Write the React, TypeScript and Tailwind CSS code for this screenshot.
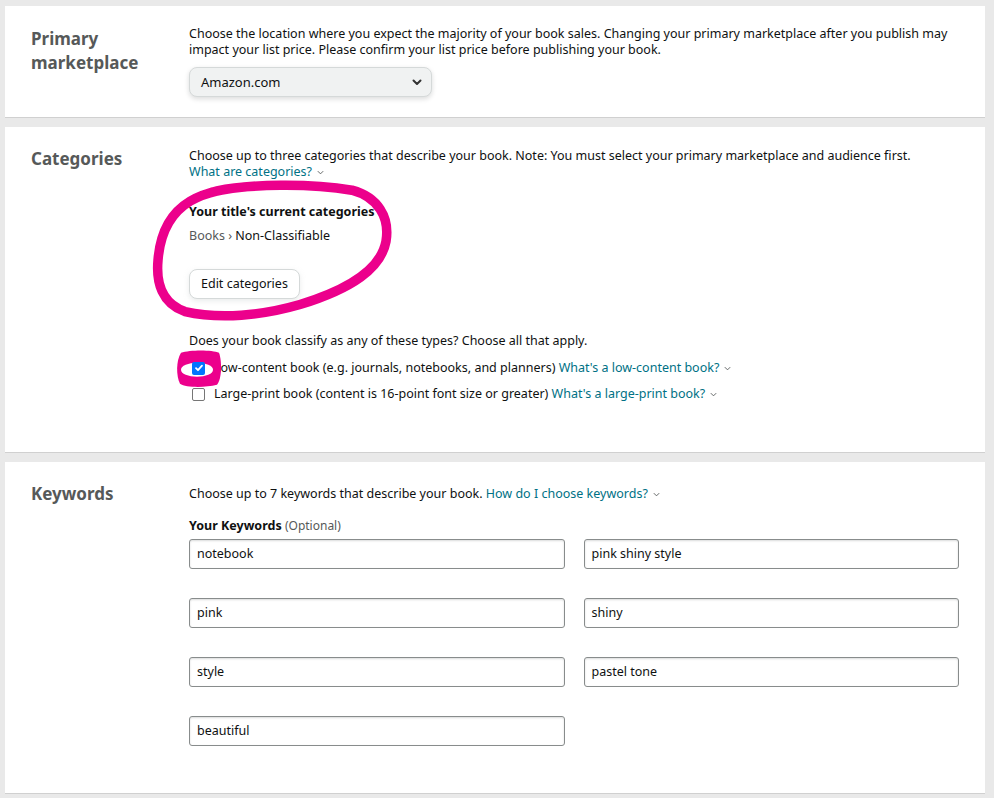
import React from 'react';

const font = { fontFamily: '"Noto Sans", "Open Sans", Arial, sans-serif' };

const Chevron = () => (
  <svg className="inline-block w-[9px] h-[9px] ml-1 align-middle" viewBox="0 0 10 10" fill="none" stroke="#565959" strokeWidth="1">
    <path d="M2 3.5l3 3 3-3" />
  </svg>
);

const Link = ({ children }: { children: React.ReactNode }) => (
  <span className="text-[#007185]">
    {children}
    <Chevron />
  </span>
);

const Card = ({
  title,
  children,
  className = '',
  titleClass = '',
}: {
  title: React.ReactNode;
  children: React.ReactNode;
  className?: string;
  titleClass?: string;
}) => (
  <div className={`bg-white border-b border-[#d0d0d0] flex px-[26px] ${className}`}>
    <div className={`w-[158px] shrink-0 text-[17px] font-bold leading-[24px] text-[#565959] ${titleClass}`}>{title}</div>
    <div className="flex-1 text-[12.5px] leading-[16px] text-[#0f1111]">{children}</div>
  </div>
);

const keywords = ['notebook', 'pink shiny style', 'pink', 'shiny', 'style', 'pastel tone', 'beautiful'];

export default function App() {
  return (
    <div className="min-h-[798px] bg-[#e9e9e9] pt-[6px] px-[5px] pr-[9px] flex flex-col gap-[9px]" style={font}>
      <Card title={<>Primary<br />marketplace</>} className="pt-[20px] pb-[20px]" titleClass="pt-[1px]">
        <p className="pr-[10px]">
          Choose the location where you expect the majority of your book sales. Changing your primary marketplace after you
          publish may impact your list price. Please confirm your list price before publishing your book.
        </p>
        <div className="mt-[9px] w-[243px] h-[30px] rounded-[8px] bg-[#f0f2f2] border border-[#d5d9d9] shadow-[0_2px_5px_rgba(15,17,17,0.15)] flex items-center justify-between pl-[11px] pr-[8px] text-[13px]">
          <span>Amazon.com</span>
          <svg className="w-[12px] h-[12px]" viewBox="0 0 12 12" fill="none" stroke="#333" strokeWidth="2" strokeLinecap="round" strokeLinejoin="round">
            <path d="M2.5 4.5l3.5 3.5 3.5-3.5" />
          </svg>
        </div>
      </Card>

      <Card title="Categories" className="pt-[20px] pb-[50px] relative">
        <p className="pt-[1px]">
          Choose up to three categories that describe your book. Note: You must select your primary marketplace and audience first.
        </p>
        <Link>What are categories?</Link>
        <div className="relative mt-[24px]">
          <div className="font-bold text-[#0f1111]">Your title's current categories</div>
          <div className="mt-[8px]">
            <span className="text-[#565959]">Books ›</span> Non-Classifiable
          </div>
          <button className="mt-[25px] h-[30px] px-[11px] rounded-[8px] bg-white border border-[#d5d9d9] shadow-[0_2px_5px_rgba(213,217,217,0.5)] text-[12.5px]">
            Edit categories
          </button>
        </div>
        <p className="mt-[34px]">Does your book classify as any of these types? Choose all that apply.</p>
        <div className="mt-[11px] flex flex-col gap-[10px]">
          <label className="relative flex items-center gap-[9px] pl-[3px]">
            <span className="relative z-10 w-[13px] h-[13px] rounded-[2px] bg-[#0075ff] flex items-center justify-center">
              <svg className="w-[10px] h-[10px]" viewBox="0 0 10 10" fill="none" stroke="white" strokeWidth="1.8" strokeLinecap="round" strokeLinejoin="round">
                <path d="M2 5.2l2 2 4-4.5" />
              </svg>
            </span>
            <span>
              Low-content book (e.g. journals, notebooks, and planners) <Link>What's a low-content book?</Link>
            </span>
          </label>
          <label className="flex items-center gap-[9px] pl-[3px]">
            <span className="w-[13px] h-[13px] rounded-[2px] border border-[#767676] bg-white" />
            <span>
              Large-print book (content is 16-point font size or greater) <Link>What's a large-print book?</Link>
            </span>
          </label>
        </div>

        {/* marker annotations */}
        <svg className="absolute left-0 top-0 w-full h-full pointer-events-none" viewBox="0 0 980 324" preserveAspectRatio="none">
          <g transform="translate(-5,-127)">
            <path
              d="M212 192 C250 183 310 183 352 190 C378 197 390 217 386 241 C381 268 352 288 300 304 C262 315 220 319 185 311 C162 303 156 282 158 260 C160 233 170 213 190 201 C205 192 230 187 255 186"
              fill="none"
              stroke="#ec008c"
              strokeWidth="9.5"
              strokeLinecap="round"
            />
            <path d="M181 352 C190 349 212 349 219 352 C222 360 222 378 217 384 C205 387 186 387 180 383 C176 375 176 360 181 352 Z" fill="#ec008c" />
            <ellipse cx="197" cy="369" rx="16" ry="7" fill="white" />
          </g>
        </svg>
      </Card>

      <Card title="Keywords" className="pt-[20px] pb-[47px]">
        <p className="pt-[4px]">
          Choose up to 7 keywords that describe your book. <Link>How do I choose keywords?</Link>
        </p>
        <div className="mt-[16px]">
          <span className="font-bold">Your Keywords</span> <span className="text-[#565959] text-[12px]">(Optional)</span>
        </div>
        <div className="mt-[5px] grid grid-cols-2 gap-x-[19px] gap-y-[29px]">
          {keywords.map((k) => (
            <div
              key={k}
              className="h-[30px] border border-[#888c8c] rounded-[3px] shadow-[inset_0_1px_2px_rgba(15,17,17,0.15)] flex items-center px-[7px] text-[12.5px]"
            >
              {k}
            </div>
          ))}
        </div>
      </Card>
    </div>
  );
}
